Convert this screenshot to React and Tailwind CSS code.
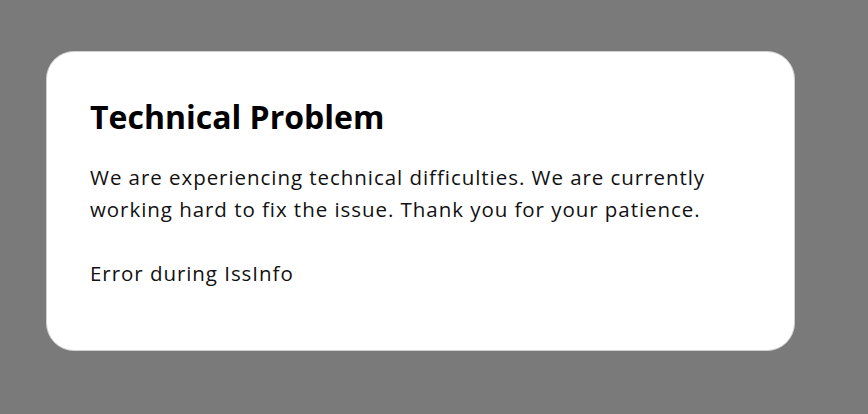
export default function App() {
  return (
    <div className="w-[868px] h-[414px] bg-[#7a7a7a] pt-[51px] pl-[46px]" style={{ fontFamily: "'Open Sans', 'Noto Sans', sans-serif" }}>
      <div className="w-[749px] h-[300px] bg-white rounded-[28px] border border-[#cfcfcf] pl-[43px] pt-[43px] [font-variant-ligatures:none]">
        <h1 className="text-[32px] font-bold text-black leading-[44px]">Technical Problem</h1>
        <div className="mt-[22px] text-[20.5px] leading-[32px] tracking-[0.95px] text-[#111]">
          <p>
            We are experiencing technical difficulties. We are currently<br />
            working hard to fix the issue. Thank you for your patience.
          </p>
          <p className="mt-[32px]">Error during IssInfo</p>
        </div>
      </div>
    </div>
  );
}
